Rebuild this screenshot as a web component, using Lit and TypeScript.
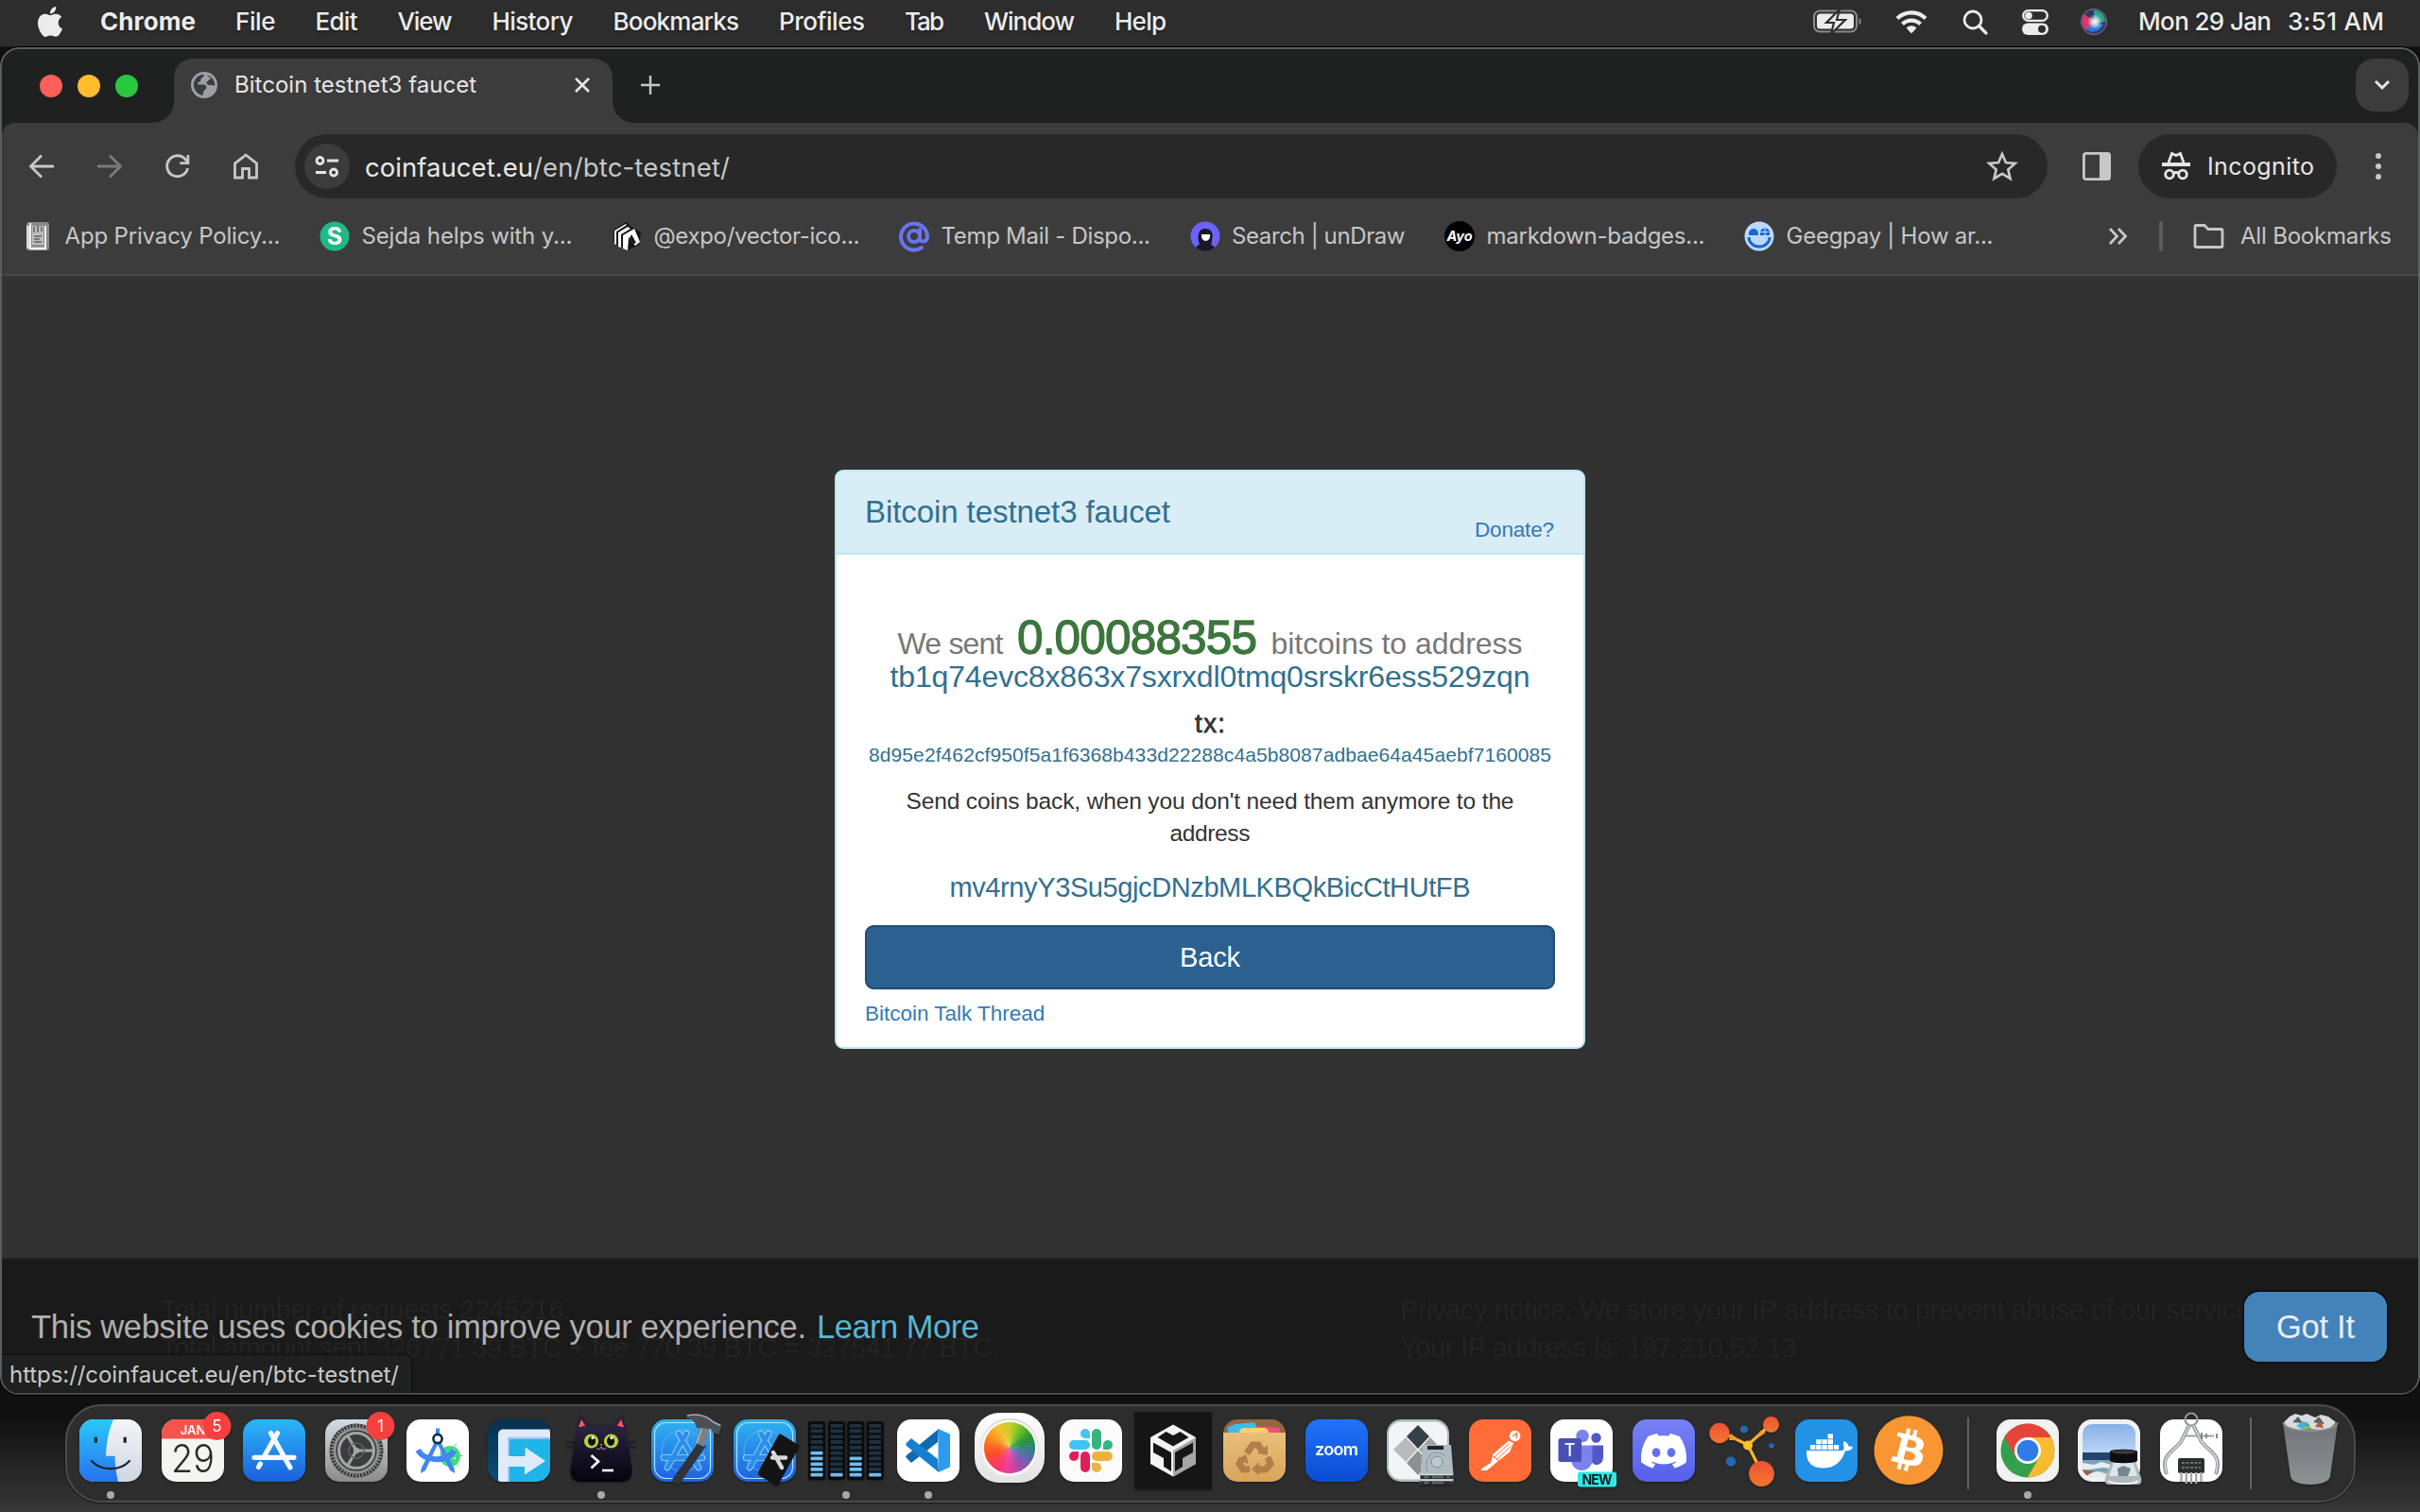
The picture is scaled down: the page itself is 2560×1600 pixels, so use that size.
import { LitElement, html, svg, css } from "lit";
import { customElement } from "lit/decorators.js";

const UI = 'Inter, "Liberation Sans", sans-serif';
const WEB = '"Liberation Sans", Arial, sans-serif';

const ctx = document.createElement("canvas").getContext("2d")!;

/** Text set to an exact advance width by distributing letter-spacing. */
const fit = (text: string, width: number, size: number, family = UI, weight = 400, cls = "") => {
  ctx.font = `${weight} ${size}px ${family}`;
  const spacing = (width - ctx.measureText(text).width) / Math.max(1, text.length - 1);
  return html`<span class="fit ${cls}" style="width:${width}px;font:${weight} ${size}px ${family};line-height:inherit;letter-spacing:${spacing.toFixed(3)}px">${text}</span>`;
};

const MENUS: [string, number][] = [
  ["File", 42.5], ["Edit", 45], ["View", 58], ["History", 86], ["Bookmarks", 133.5],
  ["Profiles", 91], ["Tab", 42], ["Window", 96], ["Help", 55],
];

const APPLE = "M12.152 6.896c-.948 0-2.415-1.078-3.96-1.04-2.04.027-3.91 1.183-4.961 3.014-2.117 3.675-.546 9.103 1.519 12.09 1.013 1.454 2.208 3.09 3.792 3.039 1.52-.065 2.09-.987 3.935-.987 1.831 0 2.35.987 3.96.948 1.637-.026 2.676-1.48 3.676-2.948 1.156-1.688 1.636-3.325 1.662-3.415-.039-.013-3.182-1.221-3.22-4.857-.026-3.04 2.48-4.494 2.597-4.559-1.429-2.09-3.623-2.324-4.39-2.376-2-.156-3.675 1.09-4.61 1.09zM15.53 3.83c.843-1.012 1.4-2.427 1.245-3.83-1.207.052-2.662.805-3.532 1.818-.78.896-1.454 2.338-1.273 3.714 1.338.104 2.715-.688 3.559-1.701";
const DISCORD = "M20.317 4.3698a19.7913 19.7913 0 00-4.8851-1.5152.0741.0741 0 00-.0785.0371c-.211.3753-.4447.8648-.6083 1.2495-1.8447-.2762-3.68-.2762-5.4868 0-.1636-.3933-.4058-.8742-.6177-1.2495a.077.077 0 00-.0785-.037 19.7363 19.7363 0 00-4.8852 1.515.0699.0699 0 00-.0321.0277C.5334 9.0458-.319 13.5799.0992 18.0578a.0824.0824 0 00.0312.0561c2.0528 1.5076 4.0413 2.4228 5.9929 3.0294a.0777.0777 0 00.0842-.0276c.4616-.6304.8731-1.2952 1.226-1.9942a.076.076 0 00-.0416-.1057c-.6528-.2476-1.2743-.5495-1.8722-.8923a.077.077 0 01-.0076-.1277c.1258-.0943.2517-.1923.3718-.2914a.0743.0743 0 01.0776-.0105c3.9278 1.7933 8.18 1.7933 12.0614 0a.0739.0739 0 01.0785.0095c.1202.099.246.1981.3728.2924a.077.077 0 01-.0066.1276 12.2986 12.2986 0 01-1.873.8914.0766.0766 0 00-.0407.1067c.3604.698.7719 1.3628 1.225 1.9932a.076.076 0 00.0842.0286c1.961-.6067 3.9495-1.5219 6.0023-3.0294a.077.077 0 00.0313-.0552c.5004-5.177-.8382-9.6739-3.5485-13.6604a.061.061 0 00-.0312-.0286zM8.02 15.3312c-1.1825 0-2.1569-1.0857-2.1569-2.419 0-1.3332.9555-2.4189 2.157-2.4189 1.2108 0 2.1757 1.0952 2.1568 2.419 0 1.3332-.9555 2.4189-2.1569 2.4189zm7.9748 0c-1.1825 0-2.1569-1.0857-2.1569-2.419 0-1.3332.9554-2.4189 2.1569-2.4189 1.2108 0 2.1757 1.0952 2.1568 2.419 0 1.3332-.946 2.4189-2.1568 2.4189Z";
const BITCOIN = "M23.638 14.904c-1.602 6.43-8.113 10.34-14.542 8.736C2.67 22.05-1.244 15.525.362 9.105 1.962 2.67 8.475-1.243 14.9.358c6.43 1.605 10.342 8.115 8.738 14.548v-.002zm-6.35-4.613c.24-1.59-.974-2.45-2.64-3.03l.54-2.153-1.315-.33-.525 2.107c-.345-.087-.705-.167-1.064-.25l.526-2.127-1.32-.33-.54 2.165c-.285-.067-.565-.132-.84-.2l-1.815-.45-.35 1.407s.975.225.955.236c.535.136.63.486.615.766l-1.477 5.92c-.075.166-.24.406-.614.314.015.02-.96-.24-.96-.24l-.66 1.51 1.71.426.93.242-.54 2.19 1.32.327.54-2.17c.36.1.705.19 1.05.273l-.51 2.154 1.32.33.545-2.19c2.24.427 3.93.257 4.64-1.774.57-1.637-.03-2.58-1.217-3.196.854-.193 1.5-.76 1.68-1.93h.01zm-3.01 4.22c-.404 1.64-3.157.75-4.05.53l.72-2.9c.896.23 3.757.67 3.33 2.37zm.41-4.24c-.37 1.49-2.662.735-3.405.55l.654-2.64c.744.18 3.137.524 2.75 2.084v.006z";

/* ---------- bookmark favicons, 32 x 32 ---------- */
const favicons = [
  svg`<rect x="4" y="1" width="24" height="30" rx="3" fill="#8b8b8b"/><rect x="4" y="5" width="4" height="24" fill="#d9d9d9"/><path d="M8 2v27M24 5v24" stroke="#eee" stroke-width="2"/><rect x="10" y="5" width="12" height="20" fill="#bdbdbd"/><path d="M12 6v6M16 4v8M20 6v5M12 16h8M12 19h6M12 22h8" stroke="#777" stroke-width="2"/><path d="M7 29h18" stroke="#f2f2f2" stroke-width="2.4"/>`,
  svg`<circle cx="16" cy="16" r="15.5" fill="#20b886"/><text x="16" y="25" font-family="Inter" font-weight="700" font-size="25" text-anchor="middle" fill="#fff">S</text>`,
  svg`<path d="M2 9 16 1l3 4 12 7-2 13-13 6-3-3-7-2-4-5Z" fill="#14141c"/><path d="M3 10v14l2 1V11l11-7-1-1ZM7 12v15l3 1V14l10-6-3-2Z" fill="#fff"/><path d="M12 15 24 8l6 14-5 4-7-9-1 14-5-2Z" fill="#fff"/><path d="m19 18 2-4 5 9-3 1Z" fill="#14141c"/>`,
  svg`<g fill="none" stroke="#6a74f2" stroke-width="4"><circle cx="16" cy="16" r="6"/><path d="M22 9v9c0 5 8 5 8-2a14 14 0 1 0-6 12" stroke-linecap="round"/></g>`,
  svg`<circle cx="16" cy="16" r="15.5" fill="#6c63ff"/><path d="M16 8c6 0 8 4 7.500 9-.5 4-1 8-2 8H10.500c-1.500-2-2-5-2-8 0-5 2-9 7.500-9Z" fill="#191824"/><path d="M6 28c3-4 6-4 10-4s7 0 10 4a15.500 15.500 0 0 1-20 0Z" fill="#191824"/><path d="M12 14h9v2a4.500 5 0 0 1-9 0Z" fill="#fff"/>`,
  svg`<circle cx="16" cy="16" r="16" fill="#000"/><text x="16" y="20.500" font-family="Inter" font-style="italic" font-weight="700" font-size="14.500" text-anchor="middle" fill="#fff">Ayo</text>`,
  svg`<circle cx="16" cy="16" r="15.500" fill="#bcd9fb"/><path d="M5 17a11 10 0 0 0 22 0" fill="none" stroke="#1765d8" stroke-width="3"/><path d="M5 15v-2a5 5 0 0 1 10 0v2Z" fill="#1765d8"/><path d="M17 15v-3a5 4.500 0 0 1 10 0v3Z" fill="#1765d8"/><path d="M17 11.500h9M22 8v7" stroke="#bcd9fb" stroke-width="1.200"/>`,
];
const BOOKMARKS: [string, number][] = [
  ["App Privacy Policy...", 228], ["Sejda helps with y...", 223], ["@expo/vector-ico...", 218],
  ["Temp Mail - Dispo...", 221.5], ["Search | unDraw", 183.5], ["markdown-badges...", 231], ["Geegpay | How ar...", 219],
];

/* ---------- dock icons, 66 x 66 with overflow ---------- */
const tile = (fill: string) => svg`<rect width="66" height="66" rx="15" fill="${fill}"/>`;
const badge = (n: string) => svg`<circle cx="58.500" cy="7" r="15" fill="#f6403f"/><text x="58.500" y="13" font-family="Inter" font-size="17" text-anchor="middle" fill="#fff">${n}</text>`;
const grad = (id: string, a: string, b: string) =>
  svg`<linearGradient id="${id}" x1="0" y1="0" x2="0" y2="1"><stop offset="0" stop-color="${a}"/><stop offset="1" stop-color="${b}"/></linearGradient>`;

const blueprint = svg`${tile("url(#gBp)")}<rect x="3.500" y="3.500" width="59" height="59" rx="12" fill="none" stroke="#b6e3ff" stroke-width="1.200"/>
  <circle cx="33" cy="33" r="22" fill="none" stroke="#6bbcf6" stroke-width=".7"/>
  <g fill="none" stroke-linecap="round" stroke-linejoin="round"><path d="M37 15 17 51M29 15l21 36M13 40.500h41" stroke="#9fd6ff" stroke-width="6.600"/><path d="M37 15 17 51M29 15l21 36M13 40.500h41" stroke="#2b8eea" stroke-width="4.800"/></g>`;

const METER_Y = [7, 12.5, 18.3, 24, 30, 35.7, 41.5, 47.5, 53, 58.7];
const meters = [[-7, 5], [14, 1], [34.2, 4], [54.7, 1]].map(([x, lit]) => svg`
  <rect x="${x}" y="2" width="18" height="62" rx="2.500" fill="#0a0c0e"/>
  ${METER_Y.map((y, i) => svg`<rect x="${x + 2.5}" y="${y - 1.9}" width="13" height="3.700" rx="1" fill="${i >= 10 - lit ? "#6dbcf2" : "#20313f"}"/>`)}`);

const WHEEL: [number, number, number][] = [
  [200, 205, 40], [105, 190, 40], [40, 150, 50], [50, 130, 130], [100, 100, 175], [165, 75, 170],
  [240, 60, 160], [250, 55, 110], [250, 70, 45], [253, 100, 30], [250, 150, 35], [240, 195, 45],
];
const wheel = Array.from({ length: 72 }, (_, i) => {
  const f = i / 6, a = WHEEL[Math.floor(f)], b = WHEEL[(Math.floor(f) + 1) % 12], k = f % 1;
  const c = a.map((v, j) => Math.round(v + (b[j] - v) * k)).join(",");
  const p = (d: number) => `${(33 + 27 * Math.sin(d)).toFixed(2)} ${(30 - 27 * Math.cos(d)).toFixed(2)}`;
  const s = (i / 72) * Math.PI * 2, e = ((i + 1.3) / 72) * Math.PI * 2;
  return svg`<path d="M33 30 ${p(s)}A27 27 0 0 1 ${p(e)}Z" fill="rgb(${c})"/>`;
});

const gearTeeth = Array.from({ length: 48 }, (_, i) => svg`<rect x="32.300" y="5" width="1.600" height="4.500" fill="#8b8d8d" transform="rotate(${i * 7.5} 33 33)"/>`);

const finder = svg`<clipPath id="cF"><rect width="66" height="66" rx="15"/></clipPath><g clip-path="url(#cF)"><rect width="66" height="66" fill="url(#gLight)"/><path d="M0 0h36c-5 11-7.500 24-8 38.700h9.500c.2 10 1.500 19 3.500 27.300H0Z" fill="url(#gFinder)"/></g>
  <path d="M17.300 18.700v6M48.200 18.700v6" stroke="#1d2430" stroke-width="3.200"/><path d="M13 44c10 11 30 11 40 0" fill="none" stroke="#1d2430" stroke-width="2.300" stroke-linecap="round"/>`;
const calendar = svg`${tile("#f5f4f1")}<path d="M0 20.500V15A15 15 0 0 1 15 0h36a15 15 0 0 1 15 15v5.500Z" fill="#f2544e"/><text x="33" y="15.700" font-family="Inter" font-weight="600" font-size="13" text-anchor="middle" fill="#fff">JAN</text>
  <text x="33" y="56" font-family="Inter" font-weight="300" font-size="41" textLength="46" lengthAdjust="spacingAndGlyphs" text-anchor="middle" fill="#2b2b2b">29</text>${badge("5")}`;
const appstore = svg`${tile("url(#gStore)")}<g stroke="#f4faff" stroke-width="5.200" stroke-linecap="round" fill="none"><path d="M36.500 14.500 22 40M18.500 47l-2 3.500M29.500 14.500 50 51M12 40.300h42"/></g>`;
const settings = svg`${tile("url(#gGrey)")}<circle cx="33" cy="33" r="28.500" fill="#2f3133"/>${gearTeeth}<circle cx="33" cy="33" r="23" fill="none" stroke="#8f9191" stroke-width="3"/><circle cx="33" cy="33" r="20.500" fill="#3a3c3e"/><g stroke="#a3a5a4" stroke-width="3.200" fill="none"><circle cx="33" cy="33" r="18.500"/><path d="M33 33h20M33 33 23 16M33 33 23 50"/></g><circle cx="33" cy="33" r="8" fill="none" stroke="#606365" stroke-width="1.500"/><circle cx="33" cy="33" r="3.200" fill="#a3a5a4"/>${badge("1")}`;
const studio = svg`${tile("#fff")}<circle cx="46" cy="39" r="11" fill="#3ddc84"/><path d="m50 29 3-4M56 38.500h3.500M52 46l3 4" stroke="#3ddc84" stroke-width="1"/><circle cx="50" cy="33" r="1" fill="#fff"/><circle cx="51" cy="41" r="1" fill="#fff"/>
  <path d="M30 23.500h6L50.500 52l.5 5-5-3-13-27.500L20 54l-5 3 .5-5Z" fill="#4285f4"/><path d="m30 39 3-7 3 7Z" fill="#fff"/><path d="M12 32.500C20 45 42 46 50.500 33" fill="none" stroke="#4285f4" stroke-width="6"/><path d="M33 9.500v8" stroke="#4285f4" stroke-width="4"/><circle cx="33" cy="20.500" r="4.600" fill="#fff" stroke="#0b3040" stroke-width="2.600"/>`;
const forklift = svg`<clipPath id="cFk"><rect width="66" height="66" rx="15"/></clipPath><g clip-path="url(#cFk)"><rect width="66" height="66" fill="url(#gFork)"/><path d="M20 18h46v48H20Z" fill="#20b4e8"/><path d="M66 10.500H17c-4 0-6 2-6 6V66h11V50h17v8.500L61 44 39.600 29.500V39H22V20.500h44Z" fill="#dfeafb"/><path d="M66 19.500H22v19.500M22 50v16" fill="none" stroke="#a9c6ee" stroke-width="1.600"/></g>`;
const cat = svg`<path d="M6 14 11-6l9 12h26l9-12 5 20Z" fill="#2a2038"/><path d="m9 8 3-8 5 8ZM57 8l-3-8-5 8Z" fill="#f2566a"/><path d="M5 22C6 10 10 7 18 6.500h30C56 7 60 10 61 22l4.500 32c.5 8-4.500 12-11 12h-43C5 66 0 62 .5 54Z" fill="url(#gCat)"/>
  <path d="M5 25l-9-2M5 28l-8 2M61 25l9-2M61 28l8 2" stroke="#15131f" stroke-width="1.200"/><circle cx="22.500" cy="23" r="7.600" fill="#b3d334"/><circle cx="43.500" cy="23" r="7.600" fill="#b3d334"/><ellipse cx="23" cy="23" rx="4" ry="5" fill="#10100f"/><ellipse cx="43" cy="23" rx="4" ry="5" fill="#10100f"/><circle cx="24" cy="19.500" r="1.700" fill="#fff"/><circle cx="44" cy="19.500" r="1.700" fill="#fff"/>
  <path d="M31.500 26h3L33 28.500Z" fill="#f0505e"/><path d="M28 30c1.500 2.500 4 2 5-1 1 3 3.500 3.500 5 1" fill="none" stroke="#aaa6c8"/><path d="m22.500 38 7.500 6.500-7.500 7" fill="none" stroke="#fff" stroke-width="2.600"/><path d="M34 54h12" stroke="#fff" stroke-width="2.600"/>`;
const xcode = svg`${blueprint}<path d="M50 24 58 28 31 67c-2 3.500-10 1-8.500-4Z" fill="#2f333b"/><path d="M52 6 62 10 56 29l-9-4Z" fill="#7b7f86"/><path d="M54 8 48 25" stroke="#b2b5ba" stroke-width="1.500"/><path d="M37.500-4.500c11-3 21-1 28 6l9 4-3 10.500-6.500-2-1.500-4L48 9C47 3 43-1 37.500-1Z" fill="#4b4f58"/><path d="M38-4c11-2.500 20 0 27 6.500l8 4" fill="none" stroke="#a5a8ae" stroke-width="1.600"/>`;
const simulator = svg`${blueprint}<path d="M50.500 16 67 26c2 1 2.500 2.500 2 4L48 68c-1.500 2.500-3 2.500-5 1L28 60c-2-1-2.500-3-1.500-5L47 17.500c1-2 2-2.500 3.500-1.500Z" fill="#141414"/><path d="m42 35 9 16M41 40.500h14" stroke="#d6d8da" stroke-width="4.500" stroke-linecap="round"/>`;
const vscode = svg`${tile("#fff")}<path d="m44 10-1 14-28 22-5-5c-1-1-1-2 0-3Z" fill="#0f6ab2"/><path d="m44 56-1-14L15 20l-5 5c-1 1-1 2 0 3Z" fill="#1580cd"/><path d="M43.500 10 56 15.500v35L43.500 56Z" fill="#2a9df0"/>`;
const photos = svg`<rect x="-4" y="-7" width="74" height="74" rx="26" fill="url(#gWhite)"/><circle cx="33" cy="29.500" r="30.500" fill="#d2d2d2"/><circle cx="33" cy="30.300" r="30" fill="#f8f8f8"/>${wheel}`;
const slack = svg`${tile("#fbfbfb")}<g fill="#41c4f0"><path d="M32 20V15a5 5 0 1 0-5 5Z"/><rect x="10" y="22" width="22" height="10" rx="5"/></g><g fill="#36b37e"><rect x="34" y="10" width="10" height="22" rx="5"/><path d="M46 32h5a5 5 0 1 0-5-5Z"/></g><g fill="#e01e5a"><path d="M20 34h-5a5 5 0 1 0 5 5Z"/><rect x="22" y="34" width="10" height="22" rx="5"/></g><g fill="#ecb23e"><rect x="34" y="34" width="22" height="10" rx="5"/><path d="M34 46v5a5 5 0 1 0 5-5Z"/></g>`;
const sandbox = svg`<rect x="-8" y="-8" width="82" height="82" fill="#161616"/><path d="M33 5.500 57 19v28L33 60.500 9 47V19Z" fill="#f4f4f4"/><path d="M57 19v28L33 60.500V33Z" fill="#a5a5a5"/><path d="m25.500 13 7.500 4 7.500-4 9 6L33 28.500 16.500 19ZM12 24.500 31 35v20l-8-5V41l-11-6ZM54 24.500 35 35v20l8-5V41l11-6Z" fill="#161616"/>`;
const recycle = svg`<clipPath id="cR"><rect width="66" height="66" rx="15"/></clipPath><g clip-path="url(#cR)"><rect width="66" height="20" fill="#93673f"/><path d="M5 15V8l8-3 20-2 5 12Z" fill="#3dbcf0"/><path d="M32 15l4-8 24 2v8Z" fill="#fb4a78"/><path d="M17 15c0-4 2-6 5-6h20c4 0 6 2 6 6Z" fill="#ffd06a"/><rect y="14" width="66" height="52" fill="url(#gBox)"/></g>
  <g fill="none" stroke="#b1804a" stroke-width="7"><path d="m25 36 6-9h6l5 8M47 40l3 7-5 6h-7M28 53h-7l-4-6 3-6"/></g><path d="m36 36 11 2 0-11ZM38 45v14l-8-6ZM14 43l10-6 3 10Z" fill="#b1804a"/>`;
const zoom = svg`${tile("url(#gZoom)")}<text x="33" y="38" font-family="Inter" font-weight="600" font-size="18" textLength="46" text-anchor="middle" fill="#fff">zoom</text>`;
const bootcamp = svg`${tile("#aeb9bd")}<rect x="2" y="2.500" width="62" height="61" rx="13" fill="#f3f4f6"/><path d="m33 6 12 12-12 13-12-13Z" fill="#344146"/><path d="m20 19 12 13-12 13L7 32Z" fill="#b8babc"/><path d="m46 19 12 13-12 13-12-13Z" fill="#a0a3a5"/><path d="m33 33 12 13-12 13-12-13Z" fill="#8d8f91"/>
  <path d="M38 27h30l2.500 31v11h-35V58Z" fill="#aebbc0"/><path d="M43 28h17v4H43Z" fill="#202528"/><circle cx="53" cy="45" r="6" fill="#bdc9ce" stroke="#7b888e"/><path d="M43 55c-6-20 14-25 19-15" fill="none" stroke="#88959b"/><path d="M35.500 58h35v5h-35ZM35.500 64.500h35V69h-35Z" fill="#2c3033"/><path d="M36 58.500h34M36 64.500h34" stroke="#d5dde0" stroke-width="1.400"/><path d="M40 61h4M48 61h12M64 61h3M40 67h4M48 67h12" stroke="#778086" stroke-width="2.500" stroke-dasharray="1.500 1"/>`;
const postman = svg`${tile("#ff6c37")}<circle cx="48.500" cy="17.500" r="5.800" fill="#fff"/><path d="m46 18 5-4M51 14l-1 6" stroke="#ff6c37" stroke-width="1.200"/><path d="M42 22.500 25 37l-2 9-9 5.500L12.500 54H19L31 44l12-9.500L47 25Z" fill="#fff"/><path d="M42 26 26 41M44.500 28 29 43M24 38l8 6" stroke="#ff6c37" stroke-width="1"/>`;
const teams = svg`${tile("#fff")}<circle cx="48.500" cy="19.500" r="5.200" fill="#4f58c4"/><circle cx="34" cy="17.500" r="6.800" fill="#7b83eb"/><path d="M43 27.500h13v12c0 11-13 11-13 2Z" fill="#4f58c4"/><path d="M22 27.500h22.500V42c0 16-22.500 16-22.500 0Z" fill="#7b83eb"/><rect x="8.500" y="20" width="24.500" height="25" rx="2.500" fill="#4850b5"/><text x="20.700" y="39" font-family="Inter" font-weight="500" font-size="18" text-anchor="middle" fill="#fff">T</text>
  <rect x="29" y="55.500" width="41" height="16" rx="3" fill="#32e8e4"/><text x="49.500" y="68.500" font-family="Inter" font-weight="700" font-size="14" textLength="32" text-anchor="middle" fill="#0b1f22">NEW</text>`;
const discord = svg`${tile("url(#gDisc)")}<path transform="translate(9 9.300)scale(2)" d="${DISCORD}" fill="#fff"/>`;
const molecule = svg`<g transform="translate(33 0)"><g fill="none" stroke="#fbb52a" stroke-width="3.200"><path d="M3 27-20 16M3 27 23 9M3 27l12 24"/></g><circle cx="3" cy="27.500" r="5" fill="#ffc226"/><path d="M-17 22-6 22-15 15ZM10 22 16 12 22 14Z" fill="#f59a2c"/><circle cx="-27" cy="14.500" r="10.700" fill="url(#gOr)"/><circle cx="27.500" cy="5.500" r="8.500" fill="url(#gOr)"/><circle cx="17.500" cy="57.500" r="13.400" fill="url(#gOr)"/><circle cx="-1" cy="10.500" r="4" fill="#2468ae"/><circle cx="28" cy="28" r="2.800" fill="#2468ae"/><circle cx="-15" cy="44.500" r="5.300" fill="#2468ae"/></g>`;
const docker = svg`${tile("#2391e6")}<g fill="#fff"><path d="M12 33h38c1.500-1 2-2.500 1.500-4-.5-3-1-4 .500-6 3 1.500 4 3.500 4.500 5.500 2-.3 3.500 0 4.500 1-1 2.500-3.500 4-8 4-4 12-12 18-23 18C18 51.500 11.500 46 12 33Z"/>${[[16, 27], [22.2, 27], [28.4, 27], [34.6, 27], [40.8, 27], [22.2, 21.2], [28.4, 21.2], [34.6, 21.2], [34.6, 15.4]].map(([x, y]) => svg`<rect x="${x}" y="${y}" width="5.400" height="5"/>`)}</g>`;
const bitcoin = svg`<circle cx="33" cy="33" r="33" fill="#fff"/><path transform="translate(-3.500 -3.800)scale(3.040)" d="${BITCOIN}" fill="#f79633"/>`;
const chrome = svg`${tile("#f2f2f2")}<circle cx="33" cy="33" r="28.500" fill="#34a04f"/><path d="M33 19h24.700a28.500 28.500 0 0 1-24.900 42.500L45.300 40Z" fill="#fabb2e"/><path d="M33 19h24.700A28.500 28.500 0 0 0 8.300 18.800L20.800 40.300Z" fill="#e5443a"/><circle cx="33" cy="33" r="14" fill="#fff"/><circle cx="33" cy="33" r="11.300" fill="#2f7be8"/>`;
const preview = svg`${tile("#f1f1f3")}<clipPath id="cP"><rect x="5" y="5" width="56" height="56" rx="10"/></clipPath><g clip-path="url(#cP)"><rect width="66" height="36" fill="url(#gSky)"/><rect y="35" width="66" height="10" fill="#22456f"/><rect y="43" width="66" height="20" fill="#7fa3b5"/><path d="M5 46l12 2 8-3 14 4 22-4v5l-20 3-14-2-22 3ZM6 58l16-3 10 3 8-2v5H6Z" fill="#e6eef0"/><path d="M5 53l12 2-8 5-4 1Z" fill="#8a6a4a"/></g>
  <path d="m36 44-7 18c-1 4 0 7 4 7h30c4 0 5-3 4-7l-6-18Z" fill="#aeb9bd"/><path d="m38 46-5 14h30l-4-14Z" fill="#dfe6e8"/><path d="m42 52 6-3 8 3-3 8H43Z" fill="#6f8895"/><path d="M32 65c6 4 26 4 32 0" fill="none" stroke="#f5f8f9" stroke-width="1.800"/><path d="M34 34c0-3 28-3 29 0v10c-3 3-26 3-29 0Z" fill="#0e0e10"/><ellipse cx="48.500" cy="34.500" rx="13" ry="2" fill="#3a3a3e"/>`;
const sysinfo = svg`${tile("#fff")}<g fill="none" stroke="#8e9a9e"><circle cx="33" cy="0" r="6.500" stroke-width="2.200"/><path d="M31 6 22 24C12 36 0 38 7 58M35 6l9 18c10 12 22 14 15 34" stroke-width="4"/><path d="M25 17.500h32" stroke-width="1.800"/></g><g fill="none" stroke="#dbe2e4" stroke-width="1.400"><path d="M31 6 22 24C12 36 1 38 7 57M35 6l9 18c10 12 21 14 15 33"/></g><path d="M44 14v7M49 15v5M60 15v5" stroke="#7e8a8e" stroke-width="2"/><rect x="19" y="41" width="28" height="16" rx="2" fill="#2b2f31"/><path d="M23 46h20M23 51h20" stroke="#7e8487" stroke-width="1.300" stroke-dasharray="3 1.500"/><path d="M22.500 56v10M27.800 56v12M33 56v12M38.200 56v12M43.500 56v10" stroke="#a4abae" stroke-width="2.400"/>`;
const trash = svg`<path d="M4 4 12 60c1 12 41 12 42 0L62 4Z" fill="url(#gTrash)"/><path d="M5 3 11-3l6-3 7 2 5-2 9 4 6-3 8 2 8 6-6 6-10 2-12-1-14 1-10-4Z" fill="#d9dcdc"/><path d="m14 3 6-6 5 7ZM36 3l6-6 6 8ZM26 8l4-5 3 6Z" fill="#596063"/><path d="m18 7 7-5 6 2-5 7Z" fill="#43b6cf"/><path d="m38 8 4-6 3 2 2 5Z" fill="#b85b3c"/><path d="M24 10l6-4 5 4Z" fill="#8abf50"/><path d="M4 3c2 12 56 12 58 0" fill="none" stroke="#8f9597" stroke-width="1.500"/>`;

interface DockItem { art: unknown; running?: boolean }
const APPS: DockItem[] = [
  { art: finder, running: true }, { art: calendar }, { art: appstore }, { art: settings }, { art: studio }, { art: forklift },
  { art: cat, running: true }, { art: xcode }, { art: simulator }, { art: meters, running: true }, { art: vscode, running: true },
  { art: photos }, { art: slack }, { art: sandbox }, { art: recycle }, { art: zoom }, { art: bootcamp }, { art: postman },
  { art: teams }, { art: discord }, { art: molecule }, { art: docker }, { art: bitcoin },
];
const RECENT: DockItem[] = [{ art: chrome, running: true }, { art: preview }, { art: sysinfo }];

const dockCell = (d: DockItem) => html`<div class="cell"><svg class="app" width="66" height="66" viewBox="0 0 66 66">${d.art}</svg>${d.running ? html`<i class="run"></i>` : ""}</div>`;

@customElement("app-root")
export class AppRoot extends LitElement {
  static styles = css`
    :host { display: block; width: 2560px; height: 1600px; overflow: hidden; font-family: Inter, "Liberation Sans", sans-serif; }
    * { box-sizing: border-box; }
    svg { display: block; flex: none; overflow: visible; }
    .defs { position: absolute; }
    .fit { display: block; white-space: nowrap; flex: none; }
    .desktop { display: flex; flex-direction: column; width: 2560px; height: 1600px; background: linear-gradient(#2d2d2d 0 49px, #101010 50px 1500px, #343434 1592px, #3a3a3a); }
    .menubar { display: flex; align-items: center; height: 50px; padding: 0 38px 4px 40px; color: #ececec; line-height: 34px; text-shadow: 0 2px 3px rgba(0,0,0,.3); }
    .menus { display: flex; gap: 42px; margin-left: 40px; }
    .status { display: flex; align-items: center; margin-left: auto; }
    .wifi { margin-left: 35px; } .find { margin-left: 37px; } .ctl { margin-left: 36px; } .siri { margin: 0 33px 0 34px; } .time { margin-left: 17px; }

    .window { position: relative; flex: none; height: 1426px; border: 2px solid #5c5e5d; border-bottom-color: #484848; border-radius: 20px; box-shadow: 0 0 0 1px #000; background: #1f2120; overflow: hidden; display: flex; flex-direction: column; }
    .tabs { display: flex; height: 78px; padding: 10px 10px 0 40px; flex: none; }
    .lights { display: flex; gap: 16px; padding-top: 17px; }
    .lights i { width: 24px; height: 24px; border-radius: 50%; }
    .red { background: #ff5f57; } .amber { background: #febc2e; } .green { background: #28c840; }
    .tab { position: relative; display: flex; align-items: center; width: 464px; height: 68px; margin-left: 38px; padding: 0 23px 12px 18px; background: #3c3c3c; border-radius: 20px 20px 0 0; color: #e6e6e6; line-height: 30px; }
    .tab .title { margin-left: 18px; }
    .tab .close { margin-left: auto; }
    .flare { position: absolute; bottom: 0; width: 22px; height: 22px; }
    .flare.l { left: -22px; background: radial-gradient(circle at 0 0, transparent 21.500px, #3c3c3c 22px); }
    .flare.r { right: -22px; background: radial-gradient(circle at 100% 0, transparent 21.500px, #3c3c3c 22px); }
    .plus { margin: 18px 0 0 30px; }
    .tabsearch { display: grid; place-items: center; width: 56px; height: 56px; margin-left: auto; border-radius: 20px; background: #3c3c3c; }
    .chrome { background: #3c3c3c; border-radius: 14px 14px 0 0; border-bottom: 2px solid #484848; height: 162px; flex: none; }
    .toolbar { display: flex; align-items: center; height: 80px; padding: 12px 0 0 26px; color: #c7c7c7; }
    .nav { display: flex; gap: 40px; }
    .omni { display: flex; align-items: center; width: 1854px; height: 68px; margin-left: 36px; padding: 0 32px 0 10px; border-radius: 34px; background: #282828; }
    .site { display: grid; place-items: center; width: 48px; height: 48px; margin-right: 16px; border-radius: 50%; background: #3c3c3c; }
    .url { display: flex; padding-top: 1px; line-height: 40px; white-space: nowrap; }
    .host { color: #e8e8e8; } .path { color: #c7c7c7; }
    .star { margin-left: auto; }
    .panel { margin-left: 37px; }
    .incog { display: flex; align-items: center; gap: 18px; width: 210px; height: 68px; margin-left: 29px; padding-left: 25px; border-radius: 34px; background: #282828; color: #e6e6e6; line-height: 36px; }
    .more { margin-left: 41px; }
    .marks { display: flex; align-items: center; height: 80px; padding: 0 28px 0 22px; gap: 41.500px; color: #c7c7c7; line-height: 34px; }
    .mark { display: flex; align-items: center; gap: 12.500px; }
    .over { margin: 0 -4px 0 auto; }
    .rule { width: 4px; height: 32px; margin: 0 -9px 0 -5px; border-radius: 2px; background: #5c5c5c; }
    .all { display: flex; align-items: center; gap: 17px; }

    .page { flex: 1; background: #323232; font-family: "Liberation Sans", Arial, sans-serif; padding-top: 205px; }
    .card { width: 794px; height: 613px; margin: 0 auto; background: #fff; border: 2px solid #bce8f1; border-radius: 9px; overflow: hidden; }
    .head { display: flex; justify-content: space-between; height: 88px; padding: 24px 31px 0 30px; background: #d9edf7; border-bottom: 2px solid #bce8f1; color: #31708f; line-height: 38px; }
    .donate { margin-top: 19px; color: #337ab7; line-height: 38px; }
    .body { display: flex; flex-direction: column; align-items: center; padding: 65px 30px 0; color: #333; }
    .sent { display: flex; align-items: baseline; gap: 14.500px; height: 46px; line-height: 46px; color: #777; }
    .amount { color: #3c763d; -webkit-text-stroke: 1.300px #3c763d; }
    .addr { line-height: 36px; color: #31708f; }
    .tx { margin-top: 17px; line-height: 30px; -webkit-text-stroke: .8px #333; }
    .hash { margin-top: 4px; line-height: 28px; color: #31708f; }
    .note { display: flex; flex-direction: column; align-items: center; margin-top: 18px; line-height: 34px; }
    .back-addr { margin-top: 20px; line-height: 40px; color: #31708f; }
    .btn { display: grid; place-items: center; width: 730px; height: 68px; margin-top: 20px; border: 2px solid #204d74; border-radius: 9px; background: #2b608f; color: #fff; line-height: 40px; }
    .thread { align-self: flex-start; margin-top: 11px; line-height: 30px; color: #337ab7; }
    .stats { display: grid; grid-template-columns: 1311px 1fr; margin: 256px 0 0 168px; line-height: 40px; color: #434343; }
    .stats div { display: flex; flex-direction: column; }
    .cookie { position: absolute; left: 0; right: 0; bottom: 0; height: 142px; display: flex; align-items: center; padding: 2px 31px 0; background: rgba(0,0,0,.48); box-shadow: 0 -1px 2px rgba(0,0,0,.25); color: #b0b0b0; line-height: 44px; }
    .learn { margin-left: 11px; color: #5bb5d2; }
    .got { display: grid; place-items: center; width: 151px; height: 74px; margin: 0 2px 0 auto; border-radius: 16px; background: rgba(72,140,200,.92); color: #e9eef3; box-shadow: 0 0 0 1.500px #0c0c0c; }
    .bubble { position: absolute; left: 0; bottom: 0; width: 433px; height: 40px; padding-left: 8px; background: #1f2120; border-radius: 0 8px 0 0; box-shadow: 0 0 3px #000; color: #c9c9c9; line-height: 41px; }

    .dock { display: flex; align-items: center; width: 2423px; height: 104px; margin: 10px 0 0 69px; padding-left: 3px; border: 2px solid #4c4c4c; border-radius: 38px; background: #2d2d2d; box-shadow: 0 0 0 1px #161616; }
    .cell { display: flex; flex-direction: column; align-items: center; width: 86.450px; height: 100px; padding-top: 14px; flex: none; }
    .app { filter: drop-shadow(0 1px 1px rgba(0,0,0,.4)); }
    .run { width: 8px; height: 8px; margin-top: 10px; border-radius: 50%; background: #a9a9a9; }
    .sep { width: 2px; height: 76px; margin: 0 18.800px; background: #626262; flex: none; }
  `;

  render() {
    return html`<div class="desktop">
      <svg class="defs" width="0" height="0"><defs>
        ${grad("gBp", "#2db4f0", "#1f5fe0")}${grad("gLight", "#f4f5f8", "#cfd6e2")}${grad("gFinder", "#2bc8fa", "#2573ee")}${grad("gStore", "#2cb6f8", "#1b5fdc")}
        ${grad("gGrey", "#d3dde2", "#8d8b87")}${grad("gFork", "#07314e", "#0c4a76")}${grad("gCat", "#2b2440", "#04030f")}${grad("gWhite", "#ffffff", "#e2e2e2")}
        ${grad("gBox", "#e8bf78", "#d9a55c")}${grad("gZoom", "#1f74fb", "#0b4bd0")}${grad("gDisc", "#7681f5", "#5560ea")}${grad("gOr", "#ee5233", "#f2752f")}
        ${grad("gSky", "#7ea9e6", "#bcd6f4")}${grad("gTrash", "#6f7477", "#8d9294")}
        <radialGradient id="gSiri"><stop offset="0" stop-color="#fff"/><stop offset=".4" stop-color="#fff" stop-opacity=".7"/><stop offset="1" stop-color="#fff" stop-opacity="0"/></radialGradient>
      </defs></svg>
      <div class="menubar">
        <svg width="26" height="32" viewBox="2.200 0 19.600 24"><path d="${APPLE}" fill="#ececec"/></svg>
        <div class="menus">${fit("Chrome", 101, 26, UI, 700)}${MENUS.map(([t, w]) => fit(t, w, 26, UI, 500))}</div>
        <div class="status">
          <svg width="52" height="26" viewBox="0 0 52 26"><rect x="1" y="1.500" width="45" height="22" rx="6" fill="none" stroke="#8a8a8a" stroke-width="2"/><rect x="4" y="4.500" width="39" height="16" rx="3.500" fill="#ececec"/><path d="M48.500 9v7c3-1 3-6 0-7Z" fill="#8a8a8a"/><path d="M28 0 14 14h8l-3 12 15-15h-9Z" fill="#ececec" stroke="#2d2d2d" stroke-width="2.200"/></svg>
          <svg class="wifi" width="34" height="26" viewBox="0 0 34 26"><g fill="none" stroke="#ececec" stroke-width="4.200"><path d="M2 9.500a21.500 21.500 0 0 1 30 0"/><path d="M7.500 15.500a13.500 13.500 0 0 1 19 0"/></g><path d="M17 25.500 11.500 19.500a8 8 0 0 1 11 0Z" fill="#ececec"/></svg>
          <svg class="find" width="27" height="27" viewBox="0 0 27 27"><circle cx="11" cy="11" r="9" fill="none" stroke="#ececec" stroke-width="2.800"/><path d="m17.500 17.500 7.500 7.500" stroke="#ececec" stroke-width="3.200" stroke-linecap="round"/></svg>
          <svg class="ctl" width="28" height="27" viewBox="0 0 28 27"><rect x="1.200" y="1.200" width="25.600" height="10.600" rx="5.300" fill="none" stroke="#ececec" stroke-width="2.300"/><circle cx="7" cy="6.500" r="3.800" fill="#ececec"/><rect y="14.500" width="28" height="12.500" rx="6.200" fill="#ececec"/><circle cx="21" cy="20.700" r="4" fill="#2d2d2d"/></svg>
          <svg class="siri" width="28" height="28" viewBox="0 0 28 28"><circle cx="14" cy="14" r="13.500" fill="#2c3a66" stroke="#77808a"/><path d="M4 6a13 13 0 0 0 2 17c5-2 8-5 9-9Z" fill="#e0366c"/><path d="M14 1.500c8 1 12 6 12 12.500l-12 2Z" fill="#2f9e86"/><path d="M6 22c5 5 14 3 18-5l-10-3Z" fill="#2b78d6"/><circle cx="15" cy="14" r="8" fill="url(#gSiri)"/></svg>
          ${fit("Mon 29 Jan", 141, 26, UI, 500)}${fit("3:51 AM", 102, 26, UI, 500, "time")}
        </div>
      </div>

      <div class="window">
        <div class="tabs">
          <div class="lights"><i class="red"></i><i class="amber"></i><i class="green"></i></div>
          <div class="tab"><i class="flare l"></i><i class="flare r"></i>
            <svg width="28" height="28" viewBox="0 0 28 28"><circle cx="14" cy="14" r="14" fill="#9aa0a6"/><path d="M2.800 13C3.500 7 8 3 13 2.700c2 2-1 3-2 4.300s0 3-2 3.500-2 1.500-2 3h6c4 0 4 4 2 5.500-2 1-2 3-2.500 6C7 24 3 19.500 2.800 13Z" fill="#3c3c3c"/><path d="M17 3.300c5 1.500 8.300 6 8.300 10.700-2 1.500-3-.5-5 0-3 0-5-2-3-4s3 0 3.500-3c.3-1-3-1.500-3.800-3.700Z" fill="#3c3c3c"/></svg>
            ${fit("Bitcoin testnet3 faucet", 256, 24, UI, 400, "title")}
            <svg class="close" width="18" height="18" viewBox="0 0 18 18"><path d="m2 2 14 14M16 2 2 16" stroke="#e6e6e6" stroke-width="2.600"/></svg>
          </div>
          <svg class="plus" width="20" height="20" viewBox="0 0 20 20"><path d="M10 0v20M0 10h20" stroke="#c7c7c7" stroke-width="2.400"/></svg>
          <div class="tabsearch"><svg width="18" height="12" viewBox="0 0 18 12"><path d="m2 2 7 7 7-7" fill="none" stroke="#e6e6e6" stroke-width="3"/></svg></div>
        </div>
        <div class="chrome">
          <div class="toolbar">
            <div class="nav">
              <svg width="32" height="32" viewBox="0 0 32 32"><path d="M29 16H5M16 4.500 4.500 16 16 27.500" fill="none" stroke="#c7c7c7" stroke-width="2.800"/></svg>
              <svg width="32" height="32" viewBox="0 0 32 32"><path d="M3 16h24M16 4.500 27.500 16 16 27.500" fill="none" stroke="#7c7c7c" stroke-width="2.800"/></svg>
              <svg width="32" height="32" viewBox="0 0 32 32"><path d="M26.500 18A11 11 0 1 1 24 8.500l3 3" fill="none" stroke="#c7c7c7" stroke-width="2.900"/><path d="M28.300 4v10h-10v-2.800h7.200V4Z" fill="#c7c7c7"/></svg>
              <svg width="32" height="32" viewBox="0 0 32 32"><path d="M4.500 28V13L16 4l11.500 9v15h-8v-9.500h-7V28Z" fill="none" stroke="#c7c7c7" stroke-width="2.800"/></svg>
            </div>
            <div class="omni">
              <div class="site"><svg width="26" height="22" viewBox="0 0 26 22"><g fill="none" stroke="#e6e6e6" stroke-width="2.800"><circle cx="5.500" cy="5" r="3.500"/><path d="M13 5h12M1 17.500h11"/><circle cx="20" cy="17.500" r="3.500"/></g></svg></div>
              <div class="url">${fit("coinfaucet.eu", 178, 27.5, UI, 400, "host")}${fit("/en/btc-testnet/", 208, 27.5, UI, 400, "path")}</div>
              <svg class="star" width="32" height="32" viewBox="0 0 32 32"><path d="m16 3 3.900 9 9.800.9-7.400 6.500 2.200 9.600L16 23.900 7.500 29l2.200-9.600-7.400-6.500 9.800-.9Z" fill="none" stroke="#c7c7c7" stroke-width="2.700"/></svg>
            </div>
            <svg class="panel" width="30" height="30" viewBox="0 0 30 30"><rect x="1.400" y="1.400" width="27.200" height="27.200" rx="2" fill="none" stroke="#c7c7c7" stroke-width="2.800"/><path d="M18 1h9q2 0 2 2v24q0 2-2 2h-9Z" fill="#c7c7c7"/></svg>
            <div class="incog">
              <svg width="30" height="30" viewBox="0 0 30 30"><path d="m7 11 3.500-9.500L15 3.500l4.500-2L23 11" fill="none" stroke="#e6e6e6" stroke-width="2.800"/><path d="M0 13h30" stroke="#e6e6e6" stroke-width="4"/><g fill="none" stroke="#e6e6e6" stroke-width="2.800"><circle cx="8" cy="23.500" r="4.300"/><circle cx="22" cy="23.500" r="4.300"/><path d="M12 22.500q3-2 6 0"/></g></svg>
              ${fit("Incognito", 113, 25)}
            </div>
            <svg class="more" width="6" height="28" viewBox="0 0 6 28"><g fill="#c7c7c7"><circle cx="3" cy="3" r="3"/><circle cx="3" cy="14" r="3"/><circle cx="3" cy="25" r="3"/></g></svg>
          </div>
          <div class="marks">
            ${BOOKMARKS.map(([t, w], i) => html`<div class="mark"><svg width="32" height="32" viewBox="0 0 32 32">${favicons[i]}</svg>${fit(t, w, 24)}</div>`)}
            <svg class="over" width="21" height="18" viewBox="0 0 21 18"><path d="m2 1 7.500 8L2 17M11 1l7.500 8-7.500 8" fill="none" stroke="#c7c7c7" stroke-width="2.800"/></svg>
            <div class="rule"></div>
            <div class="all"><svg width="33" height="26" viewBox="0 0 33 26"><path d="M2 3q0-1.500 1.500-1.500H12l4 4h13.500q1.500 0 1.500 1.500v16q0 1.500-1.500 1.500h-26Q2 24.500 2 23Z" fill="none" stroke="#c7c7c7" stroke-width="2.800"/></svg>${fit("All Bookmarks", 160, 24)}</div>
          </div>
        </div>

        <div class="page">
          <div class="card">
            <div class="head">${fit("Bitcoin testnet3 faucet", 323, 33, WEB)}${fit("Donate?", 84, 22.5, WEB, 400, "donate")}</div>
            <div class="body">
              <div class="sent">${fit("We sent", 112, 32, WEB)}${fit("0.00088355", 254, 49.5, WEB, 400, "amount")}${fit("bitcoins to address", 266, 32, WEB)}</div>
              <div class="addr">${fit("tb1q74evc8x863x7sxrxdl0tmq0srskr6ess529zqn", 677, 32, WEB)}</div>
              <div class="tx">${fit("tx:", 32, 27.5, WEB)}</div>
              <div class="hash">${fit("8d95e2f462cf950f5a1f6368b433d22288c4a5b8087adbae64a45aebf7160085", 722, 21, WEB)}</div>
              <div class="note">${fit("Send coins back, when you don't need them anymore to the", 643, 24.5, WEB)}${fit("address", 85, 24.5, WEB)}</div>
              <div class="back-addr">${fit("mv4rnyY3Su5gjcDNzbMLKBQkBicCtHUtFB", 551, 29, WEB)}</div>
              <div class="btn">${fit("Back", 64, 29, WEB)}</div>
              <div class="thread">${fit("Bitcoin Talk Thread", 191, 22.5, WEB)}</div>
            </div>
          </div>
          <div class="stats">
            <div>${fit("Total number of requests 2245216.", 434, 29, WEB)}${fit("Total amount sent 326771.39 BTC + fee 770.39 BTC = 327541.77 BTC.", 888, 29, WEB)}</div>
            <div>${fit("Privacy notice: We store your IP address to prevent abuse of our service.", 908, 29, WEB)}${fit("Your IP address is: 197.210.52.13", 420, 29, WEB)}</div>
          </div>
        </div>
        <div class="cookie">${fit("This website uses cookies to improve your experience.", 820, 34.5, WEB)}${fit("Learn More", 172, 34.5, WEB, 400, "learn")}<div class="got">${fit("Got It", 83, 34.5, WEB)}</div></div>
        <div class="bubble">${fit("https://coinfaucet.eu/en/btc-testnet/", 412, 24)}</div>
      </div>

      <div class="dock">
        ${APPS.map(dockCell)}<i class="sep"></i>${RECENT.map(dockCell)}<i class="sep"></i>${dockCell({ art: trash })}
      </div>
    </div>`;
  }
}
